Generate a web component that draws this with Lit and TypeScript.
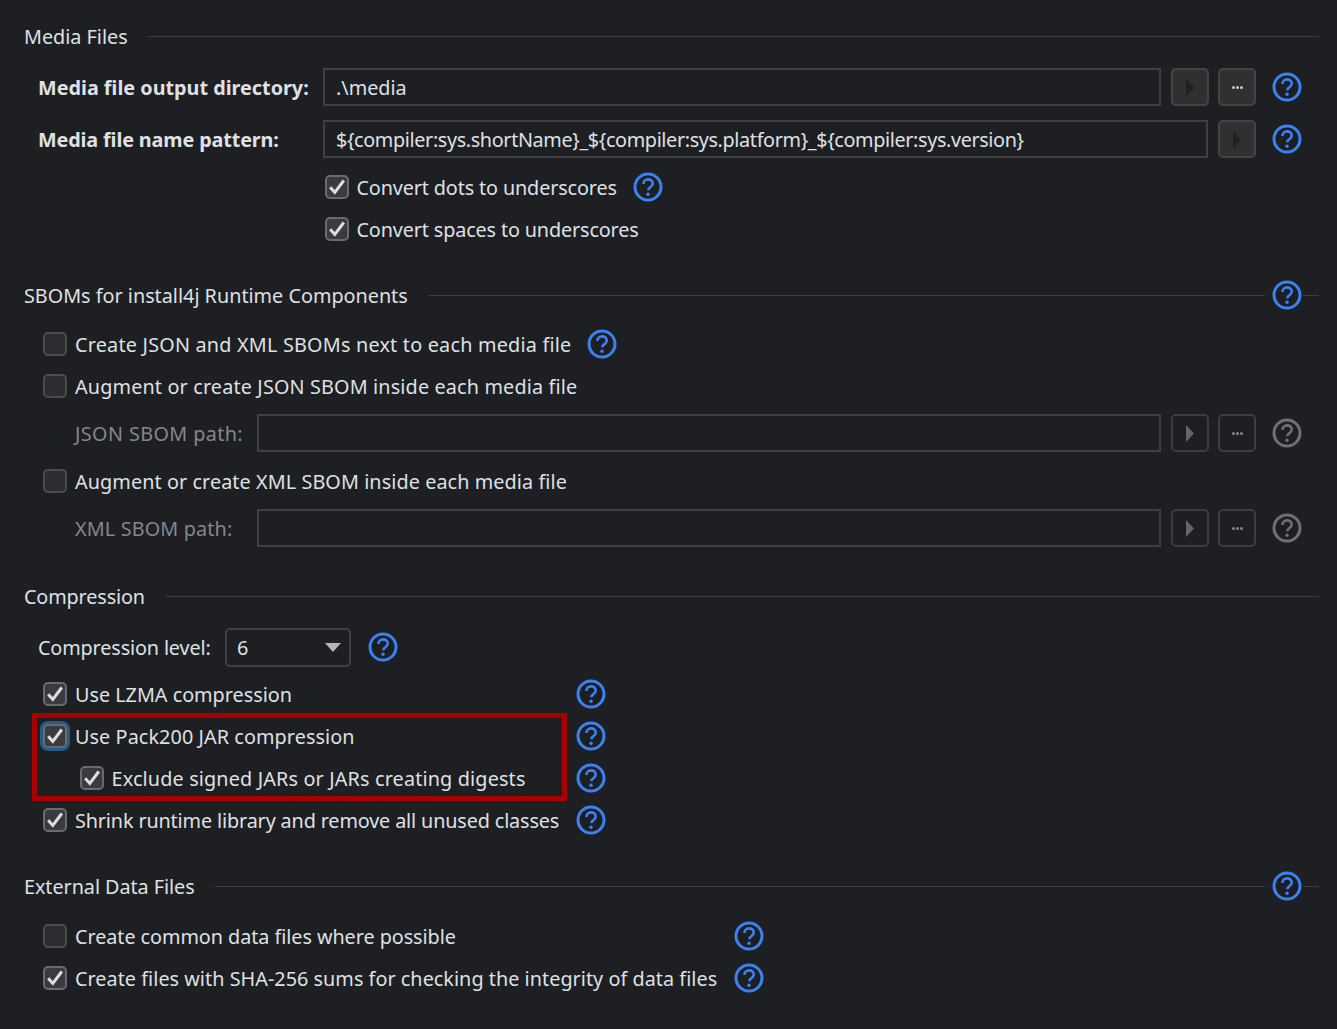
import { LitElement, html, css, nothing } from 'lit';
import { customElement } from 'lit/decorators.js';

const help = (disabled = false) => html`
  <svg class="help ${disabled ? 'off' : ''}" viewBox="0 0 30 30" width="30" height="30">
    <circle cx="15" cy="15" r="13" fill="none" stroke="currentColor" stroke-width="3"></circle>
    <path d="M10.4 11.9c0-2.7 2-4.5 4.7-4.5s4.6 1.7 4.6 4c0 2-1.1 3-2.5 3.9-1.4.9-1.9 1.5-1.9 2.9" fill="none" stroke="currentColor" stroke-width="2.6"></path>
    <circle cx="15" cy="22.2" r="1.7" fill="currentColor"></circle>
  </svg>`;

// fit: small letter-spacing class so the line length lands where the reference has it
const check = (label: string, checked = true, focused = false, fit = '') => html`
  <label class="check">
    <span class="box ${checked ? 'on' : ''} ${focused ? 'focus' : ''}">
      ${checked
        ? html`<svg viewBox="0 0 24 24" width="24" height="24"><path d="M5.2 12.3l4.6 5.1 9-11.9" fill="none" stroke="#dcdee2" stroke-width="3"></path></svg>`
        : nothing}
    </span>
    <span class=${fit}>${label}</span>
  </label>`;

const runBtn = (disabled = false) => html`
  <button class="btn ${disabled ? 'off' : ''}">
    <svg viewBox="0 0 8 17" width="8" height="17"><path d="M0 0l8 8.5-8 8.5z" fill="currentColor"></path></svg>
  </button>`;

const moreBtn = (disabled = false) => html`<button class="btn more ${disabled ? 'off' : ''}"><i></i><i></i><i></i></button>`;

const title = (text: string, withHelp = false, fit = '') => html`
  <div class="title">
    <span class=${fit}>${text}</span>
    <div class="line"></div>
    ${withHelp ? html`${help()}<div class="tail"></div>` : nothing}
  </div>`;

@customElement('app-root')
export class AppRoot extends LitElement {
  static styles = css`
    :host {
      display: block;
      width: 1337px;
      height: 1029px;
      overflow: hidden;
      background: #1e1f22;
      color: #dfe1e5;
      font-family: 'Noto Sans', 'Open Sans', sans-serif;
      font-size: 19.8px;
    }
    .tight {
      letter-spacing: -0.13px;
    }
    .tighter {
      letter-spacing: -0.05px;
    }
    .hair {
      letter-spacing: 0.04px;
    }
    .slight {
      letter-spacing: 0.09px;
    }
    .wide {
      letter-spacing: 0.16px;
    }
    .broad {
      letter-spacing: 0.22px;
    }
    .wider {
      letter-spacing: 0.4px;
    }
    .page {
      box-sizing: border-box;
      padding: 16px 18px 0 24px;
      display: flex;
      flex-direction: column;
    }
    .title {
      height: 40px;
      display: flex;
      align-items: center;
      gap: 20px;
    }
    .title .line {
      flex: 1;
      height: 1px;
      background: #3c3d40;
    }
    .title .help {
      margin: 0 -12px 0 -13px;
    }
    .title .tail {
      width: 16px;
      height: 1px;
      margin-left: -7px;
      background: #3c3d40;
    }
    .row {
      display: flex;
      align-items: center;
      height: 38px;
    }
    .fields {
      margin: 12px 17px 0 14px;
      display: flex;
      flex-direction: column;
      gap: 14px;
    }
    .key {
      width: 285px;
      flex: none;
      font-weight: 700;
    }
    .field {
      flex: 1;
      box-sizing: border-box;
      height: 38px;
      border: 2px solid #3f4042;
      padding: 0 11px;
      line-height: 35px;
      white-space: nowrap;
    }
    .field.pattern {
      letter-spacing: -0.36px;
    }
    .btn {
      flex: none;
      box-sizing: border-box;
      width: 38px;
      height: 38px;
      margin-left: 10px;
      padding: 0;
      display: flex;
      align-items: center;
      justify-content: center;
      gap: 1px;
      background: #2f3032;
      border: 2px solid #434446;
      border-radius: 5px;
      color: #1f2022;
    }
    .btn.off {
      background: transparent;
      border-color: #3c3d40;
      color: #65666a;
    }
    .btn i {
      width: 3px;
      height: 3px;
      border-radius: 50%;
      background: #c9cbcf;
    }
    .btn.off i {
      background: #85868a;
    }
    .btn + .btn {
      margin-left: 9px;
    }
    .help {
      flex: none;
      color: #3b82f0;
    }
    .help.off {
      color: #6f7072;
    }
    .row > .help:last-child {
      margin-left: 16px;
    }
    .check {
      display: flex;
      align-items: center;
      gap: 8px;
      white-space: nowrap;
    }
    .box {
      position: relative;
      flex: none;
      box-sizing: border-box;
      width: 24px;
      height: 24px;
      border: 2px solid #4b4c50;
      border-radius: 5px;
      background: #2b2d30;
    }
    .box.on {
      border-color: #6a6b6e;
      background: #393b40;
    }
    .box svg {
      position: absolute;
      left: -2px;
      top: -2px;
    }
    .box.focus {
      border-color: #6a6b6e;
      box-shadow: 0 0 0 3px #245a8c;
    }
    .checks {
      display: flex;
      flex-direction: column;
    }
    .checks .row {
      height: 42px;
    }
    .convert {
      margin: 8px 0 0 300.5px;
    }
    .sbom {
      margin: 8px 17px 0 19px;
    }
    .sbom .row.path {
      height: 38px;
      margin: 7px 0 8px;
      padding-left: 32px;
      color: #85878c;
    }
    .sbom .row.path-xml {
      margin-bottom: 4px;
    }
    .path .name {
      flex: none;
      width: 182px;
    }
    .level {
      margin: 12px 0 7px 14px;
      gap: 14px;
    }
    .level > span {
      width: 173px;
      white-space: nowrap;
    }
    .combo {
      box-sizing: border-box;
      width: 126px;
      height: 39px;
      padding: 0 8px 0 10px;
      display: flex;
      align-items: center;
      justify-content: space-between;
      border: 2px solid #3f4042;
      border-radius: 5px;
    }
    .combo svg {
      display: block;
    }
    .row.level > .help:last-child {
      margin-left: 3px;
    }
    .grid {
      position: relative;
      display: grid;
      grid-template-columns: 517px 1fr;
      grid-auto-rows: 42px;
      align-items: center;
      column-gap: 16px;
      margin-left: 19px;
    }
    .grid.external {
      grid-template-columns: 675px 1fr;
      margin-top: 9px;
    }
    .grid .help {
      justify-self: start;
    }
    .indent {
      padding-left: 36.5px;
    }
    .marked {
      position: absolute;
      left: -11px;
      top: 40px;
      width: 535px;
      height: 88px;
      box-sizing: border-box;
      border: 5px solid #a80000;
      pointer-events: none;
    }
    .section {
      margin-top: 25px;
    }
  `;

  render() {
    return html`
      <div class="page">
        ${title('Media Files')}
        <div class="fields">
          <div class="row">
            <span class="key">Media file output directory:</span>
            <div class="field">.\\media</div>
            ${runBtn()}${moreBtn()}${help()}
          </div>
          <div class="row">
            <span class="key tight">Media file name pattern:</span>
            <div class="field pattern">\${compiler:sys.shortName}_\${compiler:sys.platform}_\${compiler:sys.version}</div>
            ${runBtn()}${help()}
          </div>
        </div>
        <div class="checks convert">
          <div class="row">${check('Convert dots to underscores', true, false, 'tight')}${help()}</div>
          <div class="row">${check('Convert spaces to underscores', true, false, 'tight')}</div>
        </div>

        <div class="section">${title('SBOMs for install4j Runtime Components', true)}</div>
        <div class="checks sbom">
          <div class="row">${check('Create JSON and XML SBOMs next to each media file', false, false, 'broad')}${help()}</div>
          <div class="row">${check('Augment or create JSON SBOM inside each media file', false, false, 'wide')}</div>
          <div class="row path">
            <span class="name wider">JSON SBOM path:</span>
            <div class="field"></div>
            ${runBtn(true)}${moreBtn(true)}${help(true)}
          </div>
          <div class="row">${check('Augment or create XML SBOM inside each media file', false, false, 'slight')}</div>
          <div class="row path path-xml">
            <span class="name wide">XML SBOM path:</span>
            <div class="field"></div>
            ${runBtn(true)}${moreBtn(true)}${help(true)}
          </div>
        </div>

        <div class="section">${title('Compression', false, 'tight')}</div>
        <div class="row level">
          <span class="tight">Compression level:</span>
          <div class="combo">
            <span>6</span>
            <svg viewBox="0 0 16 9" width="16" height="9"><path d="M0 0h16l-8 9z" fill="#b4b6ba"></path></svg>
          </div>
          ${help()}
        </div>
        <div class="grid">
          ${check('Use LZMA compression')}${help()}
          ${check('Use Pack200 JAR compression', true, true, 'slight')}${help()}
          <div class="indent">${check('Exclude signed JARs or JARs creating digests', true, false, 'wide')}</div>${help()}
          ${check('Shrink runtime library and remove all unused classes', true, false, 'tight')}${help()}
          <div class="marked"></div>
        </div>

        <div class="section">${title('External Data Files', true, 'tighter')}</div>
        <div class="grid external">
          ${check('Create common data files where possible', false, false, 'tighter')}${help()}
          ${check('Create files with SHA-256 sums for checking the integrity of data files', true, false, 'hair')}${help()}
        </div>
      </div>
    `;
  }
}
